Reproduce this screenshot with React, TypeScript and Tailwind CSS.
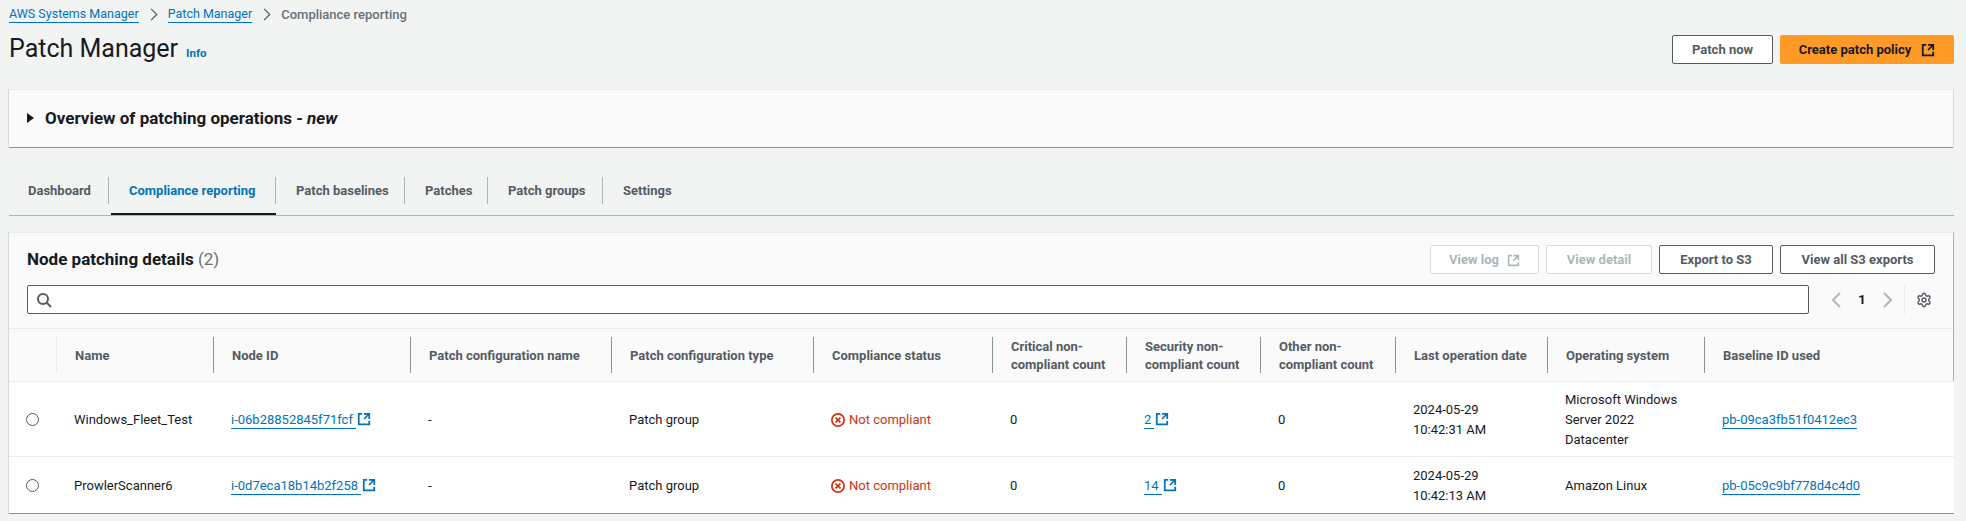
import type { ReactNode } from 'react'
import { Settings } from 'lucide-react'

const FONT = 'font-["Roboto","Noto_Sans",sans-serif]'

function ExternalIcon({ className = 'h-4 w-4' }: { className?: string }) {
  return (
    <svg viewBox="0 0 16 16" fill="none" stroke="currentColor" strokeWidth="2" className={className} aria-hidden="true">
      <path d="M14 8V2H8M14 2 8 8M6 2H2v12h12v-4" />
    </svg>
  )
}

function SearchIcon() {
  return (
    <svg viewBox="0 0 16 16" fill="none" stroke="#545b64" strokeWidth="2" className="h-4 w-4" aria-hidden="true">
      <circle cx="7" cy="7" r="5" />
      <path d="m15 15-4.5-4.5" />
    </svg>
  )
}

function ErrorIcon() {
  return (
    <svg viewBox="0 0 16 16" fill="none" stroke="#d13212" strokeWidth="2" className="h-[14px] w-[14px] shrink-0" aria-hidden="true">
      <circle cx="8" cy="8" r="7" />
      <path d="m10.8 5.2-5.6 5.6M10.8 10.8 5.2 5.2" />
    </svg>
  )
}

function Chevron({ dir }: { dir: 'left' | 'right' }) {
  return (
    <svg viewBox="0 0 16 16" fill="none" stroke="#aab7b8" strokeWidth="2" className="h-4 w-4" aria-hidden="true">
      <path d={dir === 'left' ? 'M11 1 4 8l7 7' : 'm5 15 7-7-7-7'} />
    </svg>
  )
}

function CrumbChevron() {
  return (
    <svg viewBox="0 0 16 16" fill="none" stroke="#545b64" strokeWidth="1.5" className="mx-[8px] h-[13px] w-[13px]" aria-hidden="true">
      <path d="m5 15 7-7-7-7" />
    </svg>
  )
}

function Link({ children, ext }: { children: ReactNode; ext?: boolean }) {
  return (
    <span className="inline-flex items-center text-[#0073bb]">
      <span className={`border-b border-[#0073bb] leading-[16px] ${ext ? 'pr-[3px]' : ''}`}>{children}</span>
      {ext && <ExternalIcon className="relative -top-px ml-[1px] h-[14px] w-[14px]" />}
    </span>
  )
}

function Btn({ children, disabled, className = '' }: { children: ReactNode; disabled?: boolean; className?: string }) {
  const tone = disabled ? 'border-[#d5dbdb] text-[#aab7b8]' : 'border-[#545b64] text-[#545b64]'
  return (
    <button className={`flex h-[29px] items-center justify-center rounded-[2px] border bg-white pt-[1px] text-[13px] font-bold ${tone} ${className}`}>
      {children}
    </button>
  )
}

const COLS = [47, 157, 197, 201, 202, 179, 134, 134, 135, 152, 157, 250]
const HEADERS = [
  '',
  'Name',
  'Node ID',
  'Patch configuration name',
  'Patch configuration type',
  'Compliance status',
  'Critical non-compliant count',
  'Security non-compliant count',
  'Other non-compliant count',
  'Last operation date',
  'Operating system',
  'Baseline ID used',
]

const ROWS = [
  {
    name: 'Windows_Fleet_Test',
    node: 'i-06b28852845f71fcf',
    security: '2',
    date: '10:42:31 AM',
    os: 'Microsoft Windows Server 2022 Datacenter',
    baseline: 'pb-09ca3fb51f0412ec3',
    height: 'h-[75px]',
  },
  {
    name: 'ProwlerScanner6',
    node: 'i-0d7eca18b14b2f258',
    security: '14',
    date: '10:42:13 AM',
    os: 'Amazon Linux',
    baseline: 'pb-05c9c9bf778d4c4d0',
    height: 'h-[57px]',
  },
]

const TABS = [
  { label: 'Dashboard', width: 'w-[100px]', pad: 'pl-[19px]' },
  { label: 'Compliance reporting', width: 'ml-[2px] w-[165px]', pad: 'pl-[18px]', active: true },
  { label: 'Patch baselines', width: 'w-[129px]', pad: 'pl-[20px]' },
  { label: 'Patches', width: 'w-[83px]', pad: 'pl-[20px]' },
  { label: 'Patch groups', width: 'w-[115px]', pad: 'pl-[20px]' },
  { label: 'Settings', width: 'w-[100px]', pad: 'pl-[20px]' },
]

const TD = 'px-[18px] pt-[2px] align-middle'

export default function App() {
  return (
    <div className={`h-[521px] overflow-hidden bg-[#f2f3f3] pl-[9px] pr-[12px] text-[13px] leading-[20px] text-[#16191f] ${FONT}`}>
      {/* Breadcrumbs */}
      <div className="flex h-[29px] items-center text-[12.5px]">
        <Link>AWS Systems Manager</Link>
        <CrumbChevron />
        <Link>Patch Manager</Link>
        <CrumbChevron />
        <span className="text-[13px] font-medium text-[#687078]">Compliance reporting</span>
      </div>

      {/* Page header */}
      <div className="flex h-[60px] items-start justify-between">
        <div className="flex items-baseline gap-[8px] pt-[3px]">
          <h1 className="text-[25px] leading-[34px] font-normal">Patch Manager</h1>
          <span className="text-[11.5px] font-bold text-[#0073bb]">Info</span>
        </div>
        <div className="mt-[6px] flex gap-[7px]">
          <Btn className="w-[101px]">Patch now</Btn>
          <button className="flex h-[29px] w-[174px] items-center justify-center gap-[10px] rounded-[2px] bg-[#ff9a26] pt-[1px] text-[13px] font-bold text-[#16191f]">
            Create patch policy
            <ExternalIcon className="h-[14px] w-[14px]" />
          </button>
        </div>
      </div>

      {/* Overview expander */}
      <div className="flex h-[59px] items-center gap-[11px] rounded-[1px] border-t border-[#eaeded] border-b border-b-[#879596] border-r border-r-[#d5dbdb] bg-[#fafafa] pb-[2px] pl-[18px] text-[17px] font-bold shadow-[-1px_0_0_#d5dbdb]">
        <span className="h-0 w-0 border-y-[5px] border-l-[7px] border-y-transparent border-l-[#16191f]" />
        <span>
          Overview of patching operations - <em>new</em>
        </span>
      </div>

      {/* Tabs */}
      <div className="mt-[29px] flex h-[39px] items-start border-b border-[#aab7b8]">
        {TABS.map((tab, i) => (
          <div
            key={tab.label}
            className={`flex h-[38px] ${tab.width} items-start ${tab.active ? 'border-b-2 border-[#16191f]' : ''}`}
          >
            <div
              className={`flex h-[27px] w-full items-center ${tab.pad} text-[13px] font-bold ${i < TABS.length - 1 ? 'border-r border-[#aab7b8]' : ''} ${tab.active ? 'text-[#0073bb]' : 'text-[#545b64]'}`}
            >
              {tab.label}
            </div>
          </div>
        ))}
      </div>

      {/* Table card */}
      <div className="mt-[16px] h-[282px] border-t border-[#eaeded] border-b border-b-[#879596] border-r border-r-[#aab7b8] bg-[#fafafa] shadow-[-1px_0_0_#d5dbdb]">
        <div className="flex h-[96px] flex-col border-b border-[#eaeded] pl-[18px] pr-[18px]">
          <div className="flex h-[52px] items-center justify-between">
            <div className="text-[17px] font-bold">
              Node patching details <span className="font-normal text-[#687078]">(2)</span>
            </div>
            <div className="mt-[1px] flex gap-[7px]">
              <Btn disabled className="w-[109px] gap-[8px]">
                View log <ExternalIcon className="h-[13px] w-[13px]" />
              </Btn>
              <Btn disabled className="w-[106px]">View detail</Btn>
              <Btn className="w-[114px]">Export to S3</Btn>
              <Btn className="w-[155px]">View all S3 exports</Btn>
            </div>
          </div>
          <div className="flex h-[29px] items-center">
            <div className="flex h-[29px] flex-1 items-center rounded-[2px] border border-[#545b64] bg-white pl-[8px]">
              <SearchIcon />
            </div>
            <div className="ml-[20px] flex w-[66px] items-center justify-between">
              <Chevron dir="left" />
              <span className="font-bold">1</span>
              <Chevron dir="right" />
            </div>
            <div className="ml-[9px] flex h-[29px] w-[31px] items-center justify-end border-l border-[#eaeded] pr-[3px]">
              <Settings size={16} strokeWidth={2.2} color="#545b64" />
            </div>
          </div>
        </div>

        <table className="w-full table-fixed border-collapse">
          <colgroup>
            {COLS.map((w, i) => (
              <col key={i} style={{ width: w }} />
            ))}
          </colgroup>
          <thead>
            <tr className="h-[52px] border-b border-[#eaeded]">
              {HEADERS.map((h, i) => (
                <th key={i} className="p-0 text-left align-middle text-[13px] font-bold text-[#545b64]">
                  {i > 0 && (
                    <div className={`flex h-[36px] items-center border-l pl-[18px] pr-[6px] pt-[2px] leading-[18px] ${i === 1 ? 'border-[#eaeded]' : 'border-[#879596]'}`}>
                      {h}
                    </div>
                  )}
                </th>
              ))}
            </tr>
          </thead>
          <tbody className="bg-white">
            {ROWS.map((row, i) => (
              <tr key={row.name} className={`${row.height} ${i === 0 ? 'border-b border-[#eaeded]' : ''}`}>
                <td className="pl-[17px] pt-[2px] align-middle">
                  <span className="block h-[13px] w-[13px] rounded-full border border-[#545b64]" />
                </td>
                <td className={TD}>{row.name}</td>
                <td className={TD}><Link ext>{row.node}</Link></td>
                <td className={TD}>-</td>
                <td className={TD}>Patch group</td>
                <td className={TD}>
                  <span className="flex items-center gap-[4px] text-[#d13212]">
                    <ErrorIcon />
                    Not compliant
                  </span>
                </td>
                <td className={TD}>0</td>
                <td className={TD}><Link ext>{row.security}</Link></td>
                <td className={TD}>0</td>
                <td className={TD}>
                  2024-05-29
                  <br />
                  {row.date}
                </td>
                <td className={TD}>{row.os}</td>
                <td className={TD}><Link>{row.baseline}</Link></td>
              </tr>
            ))}
          </tbody>
        </table>
      </div>
    </div>
  )
}
